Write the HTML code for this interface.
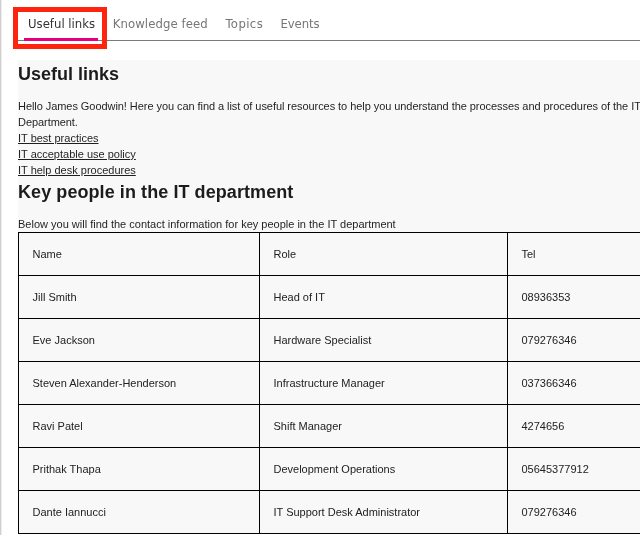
<!DOCTYPE html>
<html lang="en">
<head>
<meta charset="utf-8">
<title>Useful links</title>
<style>
  html, body { margin: 0; padding: 0; }
  body {
    width: 640px; height: 535px; overflow: hidden; position: relative;
    background: #ffffff;
    font-family: "Liberation Sans", Arial, Helvetica, sans-serif;
    color: #1f1f1f;
  }
  .tabs, .panel { will-change: transform; }
  .edge { position: absolute; left: 0; top: 0; width: 2px; height: 535px;
    background: linear-gradient(to right, #cfcfcf 0, #cfcfcf 1px, #ececec 1px, #ececec 2px); }
  .tabs { position: absolute; left: 18px; top: 0; width: 622px; height: 40px;
    border-bottom: 1px solid #7a7a7a; }
  .tab { position: absolute; top: 15px; height: 26px; box-sizing: border-box;
    font-family: "DejaVu Sans Condensed", "DejaVu Sans", "Liberation Sans", sans-serif;
    font-size: 13px; line-height: 18px; color: #767676; white-space: nowrap; }
  .tab.active { color: #333333; border-bottom: 3px solid #e5007e; }
  .hl { position: absolute; left: 13px; top: 7px; width: 84px; height: 32px;
    border: 5px solid #ff2410; }
  .panel { position: absolute; left: 18px; top: 60px; width: 622px; height: 474px;
    background: #f8f8f8; overflow: hidden; }
  h2 { position: absolute; left: 0; margin: 0; font-size: 18px; line-height: 22px;
    font-weight: bold; color: #1c1c1c; white-space: nowrap; }
  p, .lk { position: absolute; left: 0; margin: 0; font-size: 11px; line-height: 16px;
    color: #1f1f1f; }
  .lk a { color: #1f1f1f; text-decoration: underline; }
  table { position: absolute; left: 0; top: 172px; border-collapse: collapse;
    font-size: 11px; color: #222222; table-layout: fixed; width: 740px; }
  td { border: 1px solid #000; height: 43px; padding: 0 0 0 13.5px; vertical-align: middle;
    box-sizing: border-box; }
</style>
</head>
<body>
<div class="edge"></div>
<div class="tabs">
  <div class="tab active" style="left:6px;width:74px;padding-left:4px;">Useful links</div>
  <div class="tab" style="left:94.7px;letter-spacing:0.08px;">Knowledge feed</div>
  <div class="tab" style="left:207.5px;letter-spacing:0.4px;">Topics</div>
  <div class="tab" style="left:262.5px;letter-spacing:-0.12px;">Events</div>
</div>
<div class="hl"></div>
<div class="panel">
  <h2 style="top:3px;">Useful links</h2>
  <p style="top:38px;width:640px;letter-spacing:-0.06px;">Hello James Goodwin! Here you can find a list of useful resources to help you understand the processes and procedures of the IT Department.</p>
  <div class="lk" style="top:70px;"><a>IT best practices</a></div>
  <div class="lk" style="top:86px;"><a>IT acceptable use policy</a></div>
  <div class="lk" style="top:102px;"><a>IT help desk procedures</a></div>
  <h2 style="top:121px;letter-spacing:0.075px;">Key people in the IT department</h2>
  <p style="top:156px;white-space:nowrap;">Below you will find the contact information for key people in the IT department</p>
  <table>
    <colgroup><col style="width:241px"><col style="width:248px"><col style="width:251px"></colgroup>
    <tr><td>Name</td><td>Role</td><td>Tel</td></tr>
    <tr><td>Jill Smith</td><td>Head of IT</td><td>08936353</td></tr>
    <tr><td>Eve Jackson</td><td>Hardware Specialist</td><td>079276346</td></tr>
    <tr><td>Steven Alexander-Henderson</td><td>Infrastructure Manager</td><td>037366346</td></tr>
    <tr><td>Ravi Patel</td><td>Shift Manager</td><td>4274656</td></tr>
    <tr><td>Prithak Thapa</td><td>Development Operations</td><td>05645377912</td></tr>
    <tr><td>Dante Iannucci</td><td>IT Support Desk Administrator</td><td>079276346</td></tr>
  </table>
</div>
</body>
</html>
